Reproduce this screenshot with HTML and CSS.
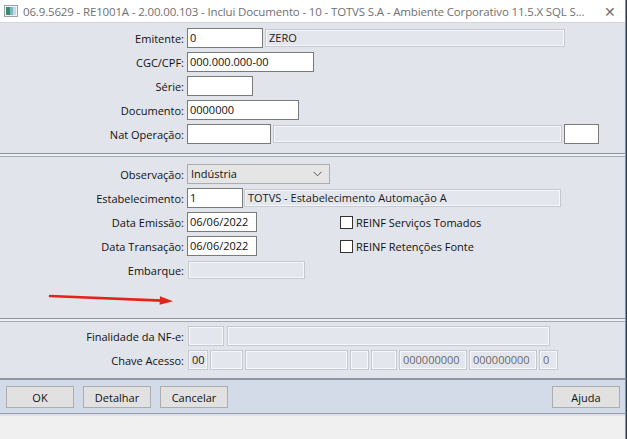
FILE: index.html
```html
<!DOCTYPE html>
<html>
	<head>
		<meta charset="UTF-8">
		<title>Inclui Documento</title>
		<link rel="stylesheet" href="styles.css">
	</head>
	<body>
		<div class="window">
			<div class="titlebar">
				<svg class="appicon" width="14" height="12" viewBox="0 0 14 12">
					<rect x="0.5" y="0.5" width="13" height="11" fill="#f4f4f4" stroke="#9aa3ad"/>
					<rect x="2" y="2" width="4" height="8" fill="#3d8a6b"/>
					<rect x="6" y="2" width="3" height="8" fill="#7fb7c9"/>
					<rect x="9" y="2" width="3" height="8" fill="#c9d8e0"/>
				</svg>
				<span class="title">06.9.5629 - RE1001A - 2.00.00.103 - Inclui Documento - 10 - TOTVS S.A - Ambiente Corporativo 11.5.X SQL S...</span>
				<span class="close">&#x2715;</span>
			</div>
			<div class="content">
				<div class="group g1">
					<div class="row">
						<span class="lbl">Emitente:</span>
						<span class="inp" style="width:76px">0</span>
						<span class="ro" style="width:300px;margin-left:2px">ZERO</span>
					</div>
					<div class="row">
						<span class="lbl">CGC/CPF:</span>
						<span class="inp" style="width:127px">000.000.000-00</span>
					</div>
					<div class="row">
						<span class="lbl">Série:</span>
						<span class="inp" style="width:66px"></span>
					</div>
					<div class="row">
						<span class="lbl">Documento:</span>
						<span class="inp" style="width:112px">0000000</span>
					</div>
					<div class="row">
						<span class="lbl">Nat Operação:</span>
						<span class="inp" style="width:84px"></span>
						<span class="ro" style="width:289px;margin-left:2px"></span>
						<span class="inp" style="width:35px;margin-left:2px"></span>
					</div>
				</div>
				<div class="sep"></div>
				<div class="group g2">
					<div class="row">
						<span class="lbl">Observação:</span>
						<span class="combo">Indústria
							<svg class="chev" width="9" height="6" viewBox="0 0 9 6"><path d="M0.5 0.8 L4.5 4.8 L8.5 0.8" fill="none" stroke="#555" stroke-width="1"/></svg>
						</span>
					</div>
					<div class="row">
						<span class="lbl">Estabelecimento:</span>
						<span class="inp" style="width:56px">1</span>
						<span class="ro" style="width:317px;margin-left:1px">TOTVS - Estabelecimento Automação A</span>
					</div>
					<div class="row">
						<span class="lbl">Data Emissão:</span>
						<span class="inp" style="width:70px">06/06/2022</span>
						<span class="check"><span class="box"></span>REINF Serviços Tomados</span>
					</div>
					<div class="row">
						<span class="lbl">Data Transação:</span>
						<span class="inp" style="width:70px">06/06/2022</span>
						<span class="check"><span class="box"></span>REINF Retenções Fonte</span>
					</div>
					<div class="row">
						<span class="lbl">Embarque:</span>
						<span class="ro" style="width:117px;margin-left:1px"></span>
					</div>
					<div class="mark">
						<svg width="200" height="34" viewBox="0 0 200 34">
							<path d="M50 12 L162 16.6" stroke="#e2231e" stroke-width="2.6" fill="none" stroke-linecap="round"/>
							<path d="M160 12.3 L173 17.3 L159.6 20.8 Z" fill="#e2231e"/>
						</svg>
					</div>
				</div>
				<div class="sep"></div>
				<div class="group g3">
					<div class="row">
						<span class="lbl">Finalidade da NF-e:</span>
						<span class="ro tall" style="width:36px;margin-left:1px"></span>
						<span class="ro tall" style="width:323px;margin-left:3px"></span>
					</div>
					<div class="row">
						<span class="lbl">Chave Acesso:</span>
						<span class="ro tall dark" style="width:20px;margin-left:1px">00</span>
						<span class="ro tall" style="width:33px;margin-left:2px"></span>
						<span class="ro tall" style="width:103px;margin-left:2px"></span>
						<span class="ro tall" style="width:19px;margin-left:2px"></span>
						<span class="ro tall" style="width:26px;margin-left:2px"></span>
						<span class="ro tall" style="width:68px;margin-left:2px">000000000</span>
						<span class="ro tall" style="width:68px;margin-left:2px">000000000</span>
						<span class="ro tall" style="width:19px;margin-left:2px">0</span>
					</div>
				</div>
				<div class="buttons">
					<button class="btn">OK</button>
					<button class="btn">Detalhar</button>
					<button class="btn">Cancelar</button>
					<span class="fill"></span>
					<button class="btn">Ajuda</button>
				</div>
				<div class="footer"></div>
			</div>
		</div>
	</body>
</html>
```

FILE: styles.css
```css
html, body{
	margin: 0;
	padding: 0;
}
body{
	width: 627px;
	height: 439px;
	overflow: hidden;
	background: #2c3b57;
	font-family: "Open Sans", "Noto Sans", sans-serif;
	font-size: 11px;
	color: #111;
}
.window{
	width: 626px;
	height: 439px;
	display: flex;
	flex-direction: column;
	background: #f0f0f0;
	border-right: 1px solid #8b8f96;
	box-sizing: border-box;
}
.titlebar{
	height: 22px;
	background: #fff;
	border-bottom: 1px solid #d4d6da;
	display: flex;
	align-items: center;
	color: #707070;
	font-size: 11.5px;
	white-space: nowrap;
	overflow: hidden;
}
.appicon{
	margin: 0 5px 0 4px;
	flex: none;
}
.title{
	flex: 1;
	letter-spacing: -0.15px;
}
.close{
	width: 30px;
	text-align: center;
	font-size: 14px;
	color: #6e6e6e;
}
.content{
	flex: 1;
	display: flex;
	flex-direction: column;
	background: #e1e4ea;
}
.group{
	display: flex;
	flex-direction: column;
	gap: 4px;
}
.g1{
	padding: 5px 0 9px;
}
.g2{
	padding: 7px 0 0;
}
.g3{
	padding: 4px 0 8px;
}
.row{
	height: 20px;
	display: flex;
	align-items: center;
}
.lbl{
	width: 187px;
	padding-right: 3px;
	box-sizing: border-box;
	text-align: right;
	flex: none;
	white-space: nowrap;
}
.inp{
	height: 20px;
	box-sizing: border-box;
	background: #fff;
	border: 1px solid #7a7a7a;
	padding: 0 2px;
	line-height: 18px;
	flex: none;
	white-space: nowrap;
}
.ro{
	height: 18px;
	box-sizing: border-box;
	background: #e3e6ec;
	border: 1px solid #c6c9cf;
	box-shadow: inset 0 0 0 1px #f6f7f9;
	padding: 0 3px;
	line-height: 16px;
	color: #1a1a1a;
	flex: none;
	white-space: nowrap;
}
.ro.tall{
	height: 20px;
	line-height: 18px;
	color: #6a6a6a;
}
.ro.dark{
	color: #1a1a1a;
}
.combo{
	width: 143px;
	height: 20px;
	box-sizing: border-box;
	background: #e5e5e5;
	border: 1px solid #acacac;
	padding: 0 3px;
	line-height: 18px;
	display: flex;
	align-items: center;
	justify-content: space-between;
}
.chev{
	margin-right: 4px;
}
.check{
	display: flex;
	align-items: center;
	margin-left: 83px;
	white-space: nowrap;
}
.box{
	width: 13px;
	height: 13px;
	box-sizing: border-box;
	border: 1px solid #333;
	background: #fff;
	margin-right: 3px;
}
.mark{
	height: 34px;
}
.mark svg{
	display: block;
}
.sep{
	height: 4px;
	box-sizing: border-box;
	border-top: 1px solid #8d939d;
	border-bottom: 1px solid #a6acb6;
	background: #eef0f4;
}
.buttons{
	height: 36px;
	box-sizing: border-box;
	border-top: 2px solid #8f96a2;
	border-bottom: 1px solid #979da8;
	background: #d3dbe9;
	display: flex;
	align-items: flex-start;
	gap: 9px;
	padding: 6px 5px 0 6px;
}
.fill{
	flex: 1;
}
.btn{
	width: 68px;
	height: 22px;
	margin: 0;
	background: #e1e1e1;
	border: 1px solid #adadad;
	font-family: inherit;
	font-size: 11px;
	color: #111;
	padding: 0;
}
.footer{
	flex: 1;
	border-top: 2px solid #dfe2e8;
	background: #f0f0f0;
}
```
